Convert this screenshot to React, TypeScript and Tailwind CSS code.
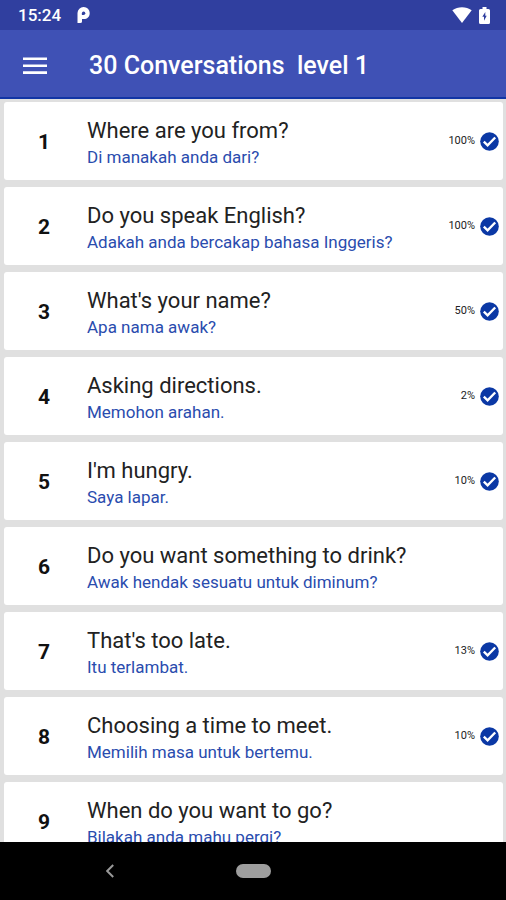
import React from 'react';

interface Conversation {
  id: number;
  title: string;
  translation: string;
  progress?: number;
}

const conversations: Conversation[] = [
  { id: 1, title: 'Where are you from?', translation: 'Di manakah anda dari?', progress: 100 },
  { id: 2, title: 'Do you speak English?', translation: 'Adakah anda bercakap bahasa Inggeris?', progress: 100 },
  { id: 3, title: "What's your name?", translation: 'Apa nama awak?', progress: 50 },
  { id: 4, title: 'Asking directions.', translation: 'Memohon arahan.', progress: 2 },
  { id: 5, title: "I'm hungry.", translation: 'Saya lapar.', progress: 10 },
  { id: 6, title: 'Do you want something to drink?', translation: 'Awak hendak sesuatu untuk diminum?' },
  { id: 7, title: "That's too late.", translation: 'Itu terlambat.', progress: 13 },
  { id: 8, title: 'Choosing a time to meet.', translation: 'Memilih masa untuk bertemu.', progress: 10 },
  { id: 9, title: 'When do you want to go?', translation: 'Bilakah anda mahu pergi?' },
];

const StatusBar: React.FC = () => (
  <div className="flex h-[30px] shrink-0 items-center justify-between bg-[#303f9f] pl-[18px] pr-4 text-white">
    <div className="flex items-center gap-4">
      <span className="text-[17px] leading-5 font-medium">15:24</span>
      <svg className="h-4 w-[13px]" viewBox="0 0 13 16" fill="none">
        <path d="M0.5 6A6 6 0 0 1 12.7 6.2C12.7 9.8 10 12 7 12H5V14A1.8 1.8 0 0 1 3.2 16H0.5Z" fill="white" />
        <path d="M4.9 8V6.3A1.7 1.7 0 1 1 6.6 8Z" fill="#303f9f" />
      </svg>
    </div>
    <div className="flex items-center gap-[7px]">
      <svg className="h-4 w-5" viewBox="0 0 20 16" fill="white">
        <path d="M10 16L0.3 3.2C6 -0.7 14 -0.7 19.7 3.2Z" />
      </svg>
      <svg className="h-[17px] w-[11px]" viewBox="0 0 11 17">
        <path d="M3.5 0H7.5V2H9.5Q11 2 11 3.5V15.5Q11 17 9.5 17H1.5Q0 17 0 15.5V3.5Q0 2 1.5 2H3.5Z" fill="white" />
        <path d="M6.3 5L3.3 9.8H5V13.8L7.7 8.8H6.3Z" fill="#303f9f" />
      </svg>
    </div>
  </div>
);

const CheckBadge: React.FC = () => (
  <svg className="h-[19px] w-[19px]" viewBox="0 0 20 20">
    <circle cx="10" cy="10" r="9.8" fill="#0b38a5" />
    <path d="M4 10.2L8 14L16 5.8" stroke="white" strokeWidth="2.5" fill="none" />
  </svg>
);

const App: React.FC = () => {
  return (
    <div className="flex h-screen flex-col overflow-hidden bg-[#e0e0e0] font-[Roboto,sans-serif]">
      <StatusBar />

      {/* App bar */}
      <header className="flex h-[69px] shrink-0 items-center border-b-2 border-[#1235a5] bg-[#3f51b5] px-[23px] pt-1 text-white">
        <button aria-label="Open menu">
          <svg className="h-[18px] w-6" viewBox="0 0 24 18" fill="white">
            <path d="M0 0.5H24V3.1H0ZM0 7.4H24V10H0ZM0 14.3H24V16.9H0Z" />
          </svg>
        </button>
        <h1 className="ml-[42px] whitespace-pre text-[25px] leading-8 font-medium">{'30 Conversations  level 1'}</h1>
      </header>

      {/* Conversations */}
      <main className="flex-1 overflow-hidden pt-[3px] pr-[3px] pl-1">
        <ul className="flex flex-col gap-[7px]">
          {conversations.map((item) => (
            <li key={item.id}>
              <button className="flex h-[78px] w-full items-center rounded-[3px] bg-white pr-1 text-left">
                <span className="w-20 pt-0.5 text-center text-[21px] leading-7 font-bold text-[#111111]">{item.id}</span>
                <span className="ml-[3px] flex flex-1 flex-col pt-1">
                  <span className="text-[22px] leading-7 font-normal text-[#222222]">{item.title}</span>
                  <span className="text-[17px] leading-6 font-normal text-[#2a4cae]">{item.translation}</span>
                </span>
                {item.progress !== undefined && (
                  <span className="flex items-center gap-[5px]">
                    <span className="text-[11px] text-[#222222]">{item.progress}%</span>
                    <CheckBadge />
                  </span>
                )}
              </button>
            </li>
          ))}
        </ul>
      </main>

      {/* System navigation */}
      <nav className="flex h-[58px] shrink-0 items-center bg-black">
        <div className="flex flex-1 justify-center pr-4">
          <button aria-label="Back">
            <svg className="h-[14px] w-2" viewBox="0 0 8 14" fill="none" stroke="#999999" strokeWidth="2">
              <path d="M7.2 1L1.2 7L7.2 13" />
            </svg>
          </button>
        </div>
        <button aria-label="Home" className="h-[14px] w-[35px] rounded-full bg-[#9e9e9e]" />
        <div className="flex-1 pr-4" />
      </nav>
    </div>
  );
};

export default App;
